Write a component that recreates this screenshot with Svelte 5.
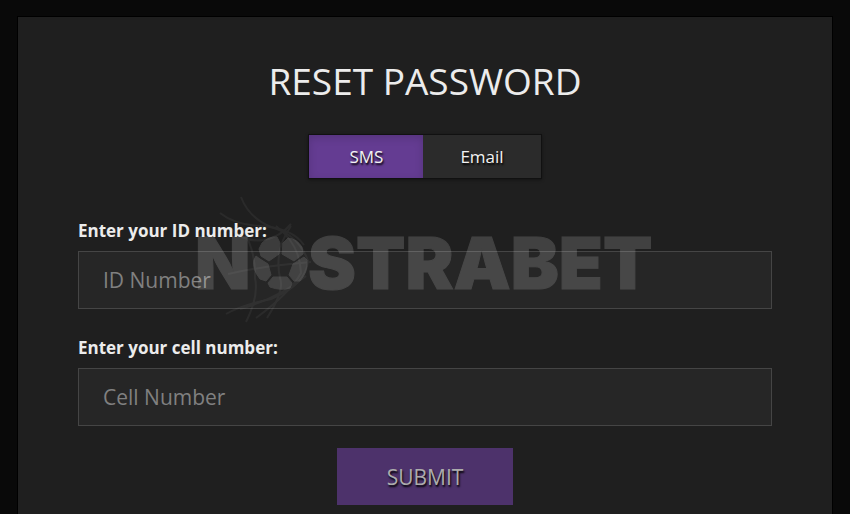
<script lang="ts">
  let method = $state('sms');
  let idNumber = $state('');
  let cellNumber = $state('');

  const methods = [
    { value: 'sms', label: 'SMS' },
    { value: 'email', label: 'Email' },
  ];

  const handleSubmit = (e: SubmitEvent) => {
    e.preventDefault();
  };
</script>

<main class="page">
  <section class="card">
    <h1>RESET PASSWORD</h1>

    <div class="tabs">
      {#each methods as m}
        <button
          type="button"
          class:active={method === m.value}
          aria-pressed={method === m.value}
          onclick={() => (method = m.value)}
        >
          {m.label}
        </button>
      {/each}
    </div>

    <form onsubmit={handleSubmit}>
      <div class="field">
        <label for="id-number">Enter your ID number:</label>
        <input id="id-number" type="text" placeholder="ID Number" bind:value={idNumber} />
      </div>

      <div class="field">
        <label for="cell-number">Enter your cell number:</label>
        <input id="cell-number" type="tel" placeholder="Cell Number" bind:value={cellNumber} />
      </div>

      <button type="submit" class="submit" disabled={!idNumber || !cellNumber}>SUBMIT</button>
    </form>
  </section>

  <svg class="watermark" viewBox="190 190 470 140" width="470" height="140" aria-hidden="true">
    <g class="letters">
      <text x="195" y="289">N</text>
      <text x="308" y="289">STRABET</text>
    </g>
    <!-- ball panels -->
    <g class="panels">
      <path d="M262 243 Q269 236 277 237 L280 243 L279 254 L269 261 L261 256 L259 249 Z" />
      <path d="M283 243 L288 238 Q297 239 302 247 L303 254 L294 261 L282 254 Z" />
      <path d="M256 256 L260 259 L268 264 L271 275 L266 281 L260 279 Q252 269 254 260 Z" />
      <path d="M304 257 L307 260 Q308 272 300 281 L294 281 L289 275 L293 264 Z" />
      <path d="M273 277 L287 277 L292 283 L290 288 Q281 291 270 287 L268 283 Z" />
    </g>
    <!-- net around the ball -->
    <g class="net">
      <path d="M241 197 Q249 218 271 227 Q299 235 308 261 Q306 285 271 299 Q242 305 226 314" />
      <path d="M220 213 Q235 225 261 226 Q292 228 304 245" />
      <path d="M230 228 Q244 243 264 240 Q280 237 291 224" />
      <path d="M242 229 Q256 250 255 278 Q259 296 246 322" />
      <path d="M291 226 Q274 250 280 278 Q285 290 267 318" />
      <path d="M228 274 Q263 266 311 262" />
      <path d="M276 226 Q300 244 301 273 Q290 293 256 318" />
      <path d="M240 309 Q279 298 306 276" />
    </g>
  </svg>
</main>

<style>
  :global(body) {
    margin: 0;
    background: #090909;
  }

  .page {
    position: relative;
    display: flex;
    min-height: 100vh;
    box-sizing: border-box;
    padding: 16px 17px 0;
    font-family: 'Segoe UI', 'Open Sans', 'Noto Sans', sans-serif;
    color: #ececec;
  }

  .card {
    flex: 1;
    padding: 40px 60px 8px;
    border: 1px solid #000;
    border-bottom: 0;
    background: #1f1f1f;
  }

  h1 {
    margin: 0;
    font-size: 37px;
    font-weight: 400;
    line-height: 48px;
    text-align: center;
  }

  .tabs {
    display: flex;
    width: fit-content;
    margin: 29px auto 0;
    border: 1px solid #111;
    box-shadow: 0 1px 3px rgba(0, 0, 0, 0.4);
  }

  button {
    border: 0;
    color: #f2f2f2;
    font-family: inherit;
    text-shadow: 1px 2px 2px #000;
    cursor: pointer;
  }

  .tabs button {
    min-width: 114px;
    height: 43px;
    padding: 0 37px;
    background: #2b2b2b;
    font-size: 17px;
  }

  .tabs .active {
    background: #643c92;
    box-shadow: inset 0 3px 8px rgba(0, 0, 0, 0.15);
  }

  form {
    margin-top: 40px;
  }

  .field {
    margin-bottom: 27px;
  }

  label {
    display: block;
    margin-bottom: 8px;
    font-size: 17px;
    font-weight: 700;
    line-height: 24px;
  }

  input {
    display: block;
    width: 100%;
    height: 58px;
    box-sizing: border-box;
    padding: 0 24px;
    border: 1px solid #454545;
    outline: none;
    background: #262626;
    color: #ececec;
    font-family: inherit;
    font-size: 21px;
  }

  input:focus {
    border-color: #643c92;
  }

  input::placeholder {
    color: #808080;
    opacity: 1;
  }

  .submit {
    display: block;
    width: 176px;
    height: 57px;
    margin: -5px auto 0;
    background: #643c92;
    font-size: 21px;
  }

  .submit:disabled {
    background: #4d326b;
    color: #acacac;
    cursor: default;
  }

  .watermark {
    position: absolute;
    top: 190px;
    left: 50%;
    margin-left: -235px;
    pointer-events: none;
  }

  .letters {
    fill: #fff;
    stroke: #fff;
    stroke-width: 1;
    opacity: 0.15;
    font-family: Inter, sans-serif;
    font-size: 72px;
    font-weight: 900;
  }

  .panels {
    fill: #fff;
    stroke: #fff;
    stroke-width: 1;
    opacity: 0.13;
  }

  .net {
    fill: none;
    stroke: #aaa;
    stroke-width: 2;
    opacity: 0.08;
  }
</style>
